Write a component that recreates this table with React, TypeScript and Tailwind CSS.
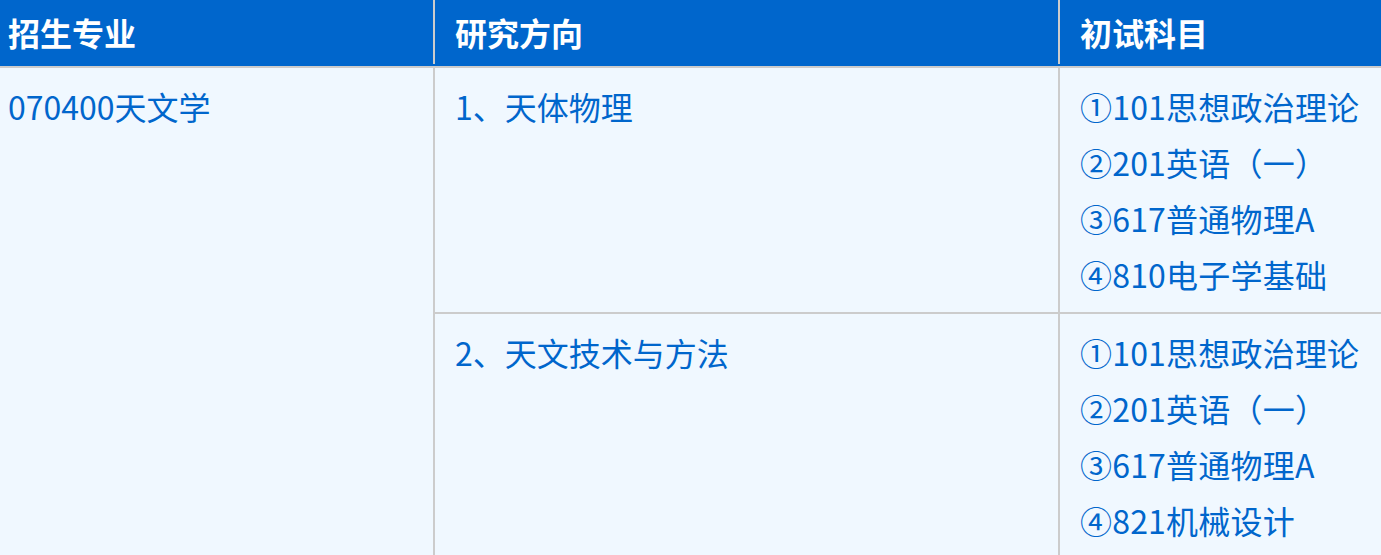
const rows = [
  {
    direction: '1、天体物理',
    subjects: ['①101思想政治理论', '②201英语（一）', '③617普通物理A', '④810电子学基础'],
  },
  {
    direction: '2、天文技术与方法',
    subjects: ['①101思想政治理论', '②201英语（一）', '③617普通物理A', '④821机械设计'],
  },
]

export default function App() {
  return (
    <div className="h-[555px] w-[1381px] overflow-hidden bg-[#f0f8ff] font-['Noto_Sans_CJK_SC','Noto_Sans',sans-serif] text-[32px] leading-[56px] text-[#0066cc]">
      {/* header */}
      <div className="flex h-[68px] border-b-2 border-[#cccccc] bg-[#0066cc] pb-[2px] font-bold text-white">
        <div className="flex w-[435px] shrink-0 items-center border-r-2 border-[#cccccc] pl-2">招生专业</div>
        <div className="flex w-[625px] shrink-0 items-center border-r-2 border-[#cccccc] pl-5">研究方向</div>
        <div className="flex flex-1 items-center whitespace-nowrap pl-5">初试科目</div>
      </div>

      {/* body */}
      <div className="flex">
        <div className="w-[435px] shrink-0 border-r-2 border-[#cccccc] pb-[10px] pl-2 pt-[10px]">070400天文学</div>
        <div className="flex flex-1 flex-col">
          {rows.map((row, i) => (
            <div key={i} className="flex border-b-2 border-[#cccccc]">
              <div className="w-[625px] shrink-0 border-r-2 border-[#cccccc] pb-[10px] pl-5 pt-[10px]">{row.direction}</div>
              <div className="flex-1 whitespace-nowrap pb-[10px] pl-5 pt-[10px] tracking-[0.2px]">
                {row.subjects.map((s) => (
                  <div key={s}>{s}</div>
                ))}
              </div>
            </div>
          ))}
        </div>
      </div>
    </div>
  )
}
